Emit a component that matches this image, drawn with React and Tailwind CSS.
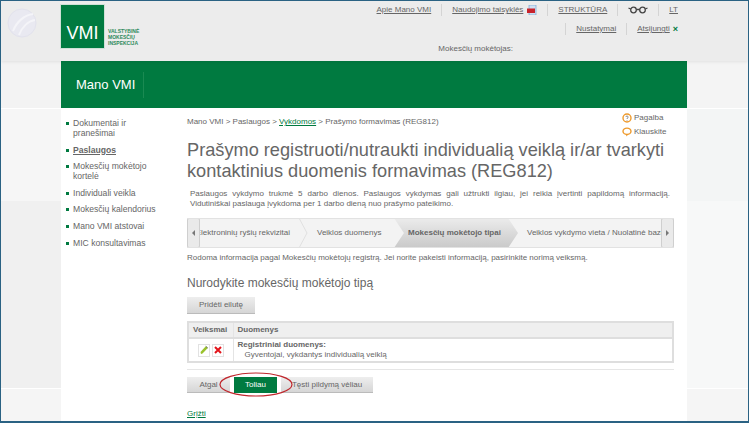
const menuItems = [
  { label: "Dokumentai ir pranešimai" },
  { label: "Paslaugos", active: true },
  { label: "Mokesčių mokėtojo kortelė" },
  { label: "Individuali veikla" },
  { label: "Mokesčių kalendorius" },
  { label: "Mano VMI atstovai" },
  { label: "MIC konsultavimas" },
];

const Sep = () => <span className="w-px h-[12px] bg-[#d4d4d4]" />;

const TabChevron = () => (
  <svg width="10" height="30" viewBox="0 0 10 30" className="shrink-0" fill="none">
    <path d="M1 0 L9 15 L1 30" stroke="#e0e0e0" strokeWidth="1" />
  </svg>
);

const App = () => {
  return (
    <div className="w-[749px] h-[423px] overflow-hidden bg-white border-x-[1px] border-t-[1px] border-b-[2px] border-[#2a6283] flex flex-col font-['Liberation_Sans',Arial,sans-serif] text-[#666]">
      {/* top header */}
      <header className="relative h-[60px] shrink-0 bg-[#ececec] flex pl-[59px] pt-[3px] shadow-[0_1px_3px_rgba(0,0,0,0.08)]">
        <svg width="34" height="32" viewBox="0 0 34 32" className="absolute left-[4px] top-[6px]" fill="none">
          <circle cx="17" cy="16" r="14" fill="#e9e9f1" stroke="#e2e2ec" />
          <path d="M8 24 C12 14 20 8 28 7 M14 28 C17 20 23 14 30 13" stroke="#f4f4f8" strokeWidth="2" />
        </svg>
        <div className="w-[45px] h-[45px] shrink-0 bg-[#007a40] border border-[#cfe0d6] flex items-end justify-center pb-[5px] text-white text-[18px] leading-[20px]">
          VMI
        </div>
        <div className="ml-[3px] mt-[24px] text-[#2c8a5c] text-[5px] leading-[6px] font-bold">
          <div>VALSTYBINĖ</div>
          <div>MOKESČIŲ</div>
          <div>INSPEKCIJA</div>
        </div>
        <div className="flex-1 relative text-[8px] leading-[12px]">
          <div className="flex items-center justify-end gap-[10px] pr-[70px] h-[12px]">
            <span className="underline">Apie Mano VMI</span>
            <Sep />
            <span className="underline flex items-center gap-[4px]">
              Naudojimo taisyklės
              <svg width="10" height="10" viewBox="0 0 10 10">
                <rect x="2" y="0" width="7" height="10" fill="#cfe0f2" stroke="#6a9ccc" strokeWidth="0.6" />
                <rect x="0" y="3.5" width="8" height="4.5" fill="#c8232c" />
              </svg>
            </span>
            <Sep />
            <span className="underline">STRUKTŪRA</span>
            <Sep />
            <svg width="20" height="8" viewBox="0 0 20 8" fill="none" stroke="#444" strokeWidth="1.3">
              <circle cx="5.5" cy="4" r="2.8" />
              <circle cx="14.5" cy="4" r="2.8" />
              <path d="M8.3 3.5 H11.7 M2.7 3 L0.5 2 M17.3 3 L19.5 2" />
            </svg>
            <Sep />
            <span className="underline">LT</span>
          </div>
          <div className="flex items-center justify-end gap-[10px] pr-[70px] mt-[7px] h-[12px]">
            <Sep />
            <span className="underline">Nustatymai</span>
            <Sep />
            <span className="flex items-center gap-[3px]">
              <span className="underline">Atsijungti</span>
              <span className="text-[#007a40] font-bold text-[9px] leading-none">×</span>
            </span>
          </div>
          <div className="mt-[8px] ml-[299px] whitespace-nowrap">Mokesčių mokėtojas:</div>
        </div>
      </header>

      <div className="flex-1 flex min-h-0">
        {/* left side strip */}
        <div className="w-[60px] shrink-0 flex flex-col">
          <div className="h-[47px] bg-[#f3f3f3]" />
          <div className="h-[1px] bg-white" />
          <div className="h-[92px] bg-[#f6f6f6]" />
          <div className="h-[187px] bg-[#f0f0f0]" />
          <div className="h-[1px] bg-white" />
          <div className="flex-1 bg-[#f5f5f5]" />
        </div>

        <div className="w-[626px] shrink-0 flex flex-col">
          <div className="h-[47px] shrink-0 bg-[#007a40] flex items-center pl-[15px]">
            <span className="text-white text-[13px] pr-[8px] h-[26px] leading-[26px] border-r border-[#1a8a52]">
              Mano VMI
            </span>
          </div>

          <div className="flex-1 flex min-h-0 bg-white">
            {/* sidebar menu */}
            <nav className="w-[126px] shrink-0 pl-[5px] pr-[22px] pt-[10px] text-[8.6px] leading-[10px]">
              {menuItems.map((item) => (
                <div key={item.label} className="flex mb-[6.6px]">
                  <span className="w-[3px] h-[3px] mt-[4px] mr-[4px] shrink-0 bg-[#007a40]" />
                  <span className={item.active ? "font-bold underline" : ""}>{item.label}</span>
                </div>
              ))}
            </nav>

            {/* main content */}
            <main className="w-[487px] shrink-0 relative pt-[9px]">
              <div className="text-[8px] leading-[10px]">
                Mano VMI &gt; Paslaugos &gt; <span className="text-[#007a40] underline">Vykdomos</span> &gt; Prašymo formavimas (REG812)
              </div>
              <div className="absolute left-[435px] top-[5px] text-[8px] leading-[10px]">
                <div className="flex items-center gap-[2px] mb-[4px]">
                  <svg width="10" height="10" viewBox="0 0 10 10" fill="none">
                    <circle cx="5" cy="5" r="4" stroke="#ee9a2c" strokeWidth="1.4" />
                    <path d="M3.8 4 C4 2.6 6.4 2.8 6 4.3 C5.8 5 5 5 5 6 M5 7.2 V7.8" stroke="#666" strokeWidth="0.8" />
                  </svg>
                  Pagalba
                </div>
                <div className="flex items-center gap-[2px]">
                  <svg width="10" height="10" viewBox="0 0 10 10" fill="none">
                    <ellipse cx="5" cy="4.3" rx="4" ry="3.2" stroke="#ee9a2c" strokeWidth="1.4" />
                    <path d="M4 7.5 L4.5 9.5 L6 7.5" fill="#ee9a2c" />
                  </svg>
                  Klauskite
                </div>
              </div>
              <h1 className="mt-[13px] text-[18.2px] leading-[21px] font-normal whitespace-nowrap">
                Prašymo registruoti/nutraukti individualią veiklą ir/ar tvarkyti
                <br />
                kontaktinius duomenis formavimas (REG812)
              </h1>
              <p className="mt-[7px] ml-[3px] w-[480px] text-[8px] leading-[10px] text-justify">
                Paslaugos vykdymo trukmė 5 darbo dienos. Paslaugos vykdymas gali užtrukti ilgiau, jei reikia įvertinti papildomą informaciją. Vidutiniškai paslauga įvykdoma per 1 darbo dieną nuo prašymo pateikimo.
              </p>

              {/* wizard tabs */}
              <div className="mt-[9px] h-[30px] w-[487px] bg-[#f3f3f3] border-y border-[#e2e2e2] flex items-center text-[8px] overflow-hidden">
                <button className="w-[13px] h-[30px] shrink-0 bg-[#eaeaea] border border-[#cfcfcf] rounded-[2px] flex items-center justify-center">
                  <span className="w-0 h-0 border-y-[3px] border-y-transparent border-r-[3px] border-r-[#777]" />
                </button>
                <div className="w-[98px] shrink-0 overflow-hidden whitespace-nowrap" dir="rtl">
                  <span dir="ltr" className="inline-block pr-[8px]">Elektroninių ryšių rekvizitai</span>
                </div>
                <TabChevron />
                <span className="w-[87px] shrink-0 pl-[9px] whitespace-nowrap">Veiklos duomenys</span>
                <div className="w-[124px] h-[30px] shrink-0 -ml-[1px] bg-gradient-to-b from-[#ececec] to-[#c9c9c9] [clip-path:polygon(0_0,92%_0,100%_50%,92%_100%,0_100%,8%_50%)] flex items-center pl-[14px] font-bold whitespace-nowrap">
                  Mokesčių mokėtojo tipai
                </div>
                <div className="flex-1 min-w-0 overflow-hidden whitespace-nowrap pl-[9px]">Veiklos vykdymo vieta / Nuolatinė bazė</div>
                <button className="w-[13px] h-[30px] shrink-0 bg-[#eaeaea] border border-[#cfcfcf] rounded-[2px] flex items-center justify-center">
                  <span className="w-0 h-0 border-y-[3px] border-y-transparent border-l-[3px] border-l-[#777]" />
                </button>
              </div>

              <p className="mt-[5px] text-[8px] leading-[10px]">
                Rodoma informacija pagal Mokesčių mokėtojų registrą. Jei norite pakeisti informaciją, pasirinkite norimą veiksmą.
              </p>
              <h2 className="mt-[12px] text-[12px] leading-[16px] font-normal">Nurodykite mokesčių mokėtojo tipą</h2>

              <button className="mt-[6px] block w-[68px] h-[17px] bg-gradient-to-b from-[#eeeeee] to-[#d6d6d6] border-b border-[#bbb] text-[8px] text-[#666]">
                Pridėti eilutę
              </button>

              <table className="mt-[7px] w-[487px] border-2 border-[#dedede] text-[8px] border-collapse">
                <thead>
                  <tr className="h-[16px] bg-[#efefef] border-b-2 border-[#dedede] font-bold text-left">
                    <th className="w-[45px] pl-[4px] border-r border-[#e4e4e4]">Veiksmai</th>
                    <th className="pl-[4px]">Duomenys</th>
                  </tr>
                </thead>
                <tbody>
                  <tr className="h-[24px]">
                    <td className="border-r border-[#e4e4e4]">
                      <div className="flex justify-center gap-[2px]">
                        <span className="w-[12px] h-[13px] border border-[#e2e2e2] flex items-center justify-center">
                          <svg width="10" height="10" viewBox="0 0 10 10">
                            <path d="M2 9 L1.5 7 L6.8 1.2 L8.8 3 L3.5 8.6 Z" fill="#9ac22c" />
                            <path d="M6.8 1.2 L8.8 3" stroke="#555" strokeWidth="0.8" />
                          </svg>
                        </span>
                        <span className="w-[12px] h-[13px] border border-[#e2e2e2] flex items-center justify-center">
                          <svg width="10" height="10" viewBox="0 0 10 10">
                            <path d="M2 2 L8 8 M8 2 L2 8" stroke="#e3141b" strokeWidth="2" />
                          </svg>
                        </span>
                      </div>
                    </td>
                    <td className="pl-[4px] leading-[10px]">
                      <div className="font-bold">Registriniai duomenys:</div>
                      <div className="pl-[7px]">Gyventojai, vykdantys individualią veiklą</div>
                    </td>
                  </tr>
                </tbody>
              </table>

              <div className="mt-[6px] h-[1px] bg-[#e6e6e6]" />

              <div className="relative mt-[7px] flex gap-[4px] text-[8px]">
                <button className="w-[43px] h-[16px] bg-gradient-to-b from-[#eeeeee] to-[#d6d6d6] border-b border-[#bbb] text-[#666]">Atgal</button>
                <button className="w-[43px] h-[16px] bg-[#007a40] text-white">Toliau</button>
                <button className="w-[92px] h-[16px] bg-gradient-to-b from-[#eeeeee] to-[#d6d6d6] border-b border-[#bbb] text-[#666]">Tęsti pildymą vėliau</button>
                <svg width="74" height="25" viewBox="0 0 74 25" className="absolute left-[32px] -top-[5px]" fill="none">
                  <ellipse cx="37" cy="12.5" rx="36" ry="11.5" stroke="#c0272d" strokeWidth="1.2" />
                </svg>
              </div>

              <a className="block mt-[16px] text-[8px] leading-[10px] text-[#007a40] underline">Grįžti</a>
            </main>
          </div>
        </div>

        {/* right side strip */}
        <div className="flex-1 flex flex-col">
          <div className="h-[47px] bg-[#f4f4f4]" />
          <div className="h-[1px] bg-white" />
          <div className="h-[92px] bg-[#f3f5f5]" />
          <div className="h-[187px] bg-[#f7f8f8]" />
          <div className="h-[1px] bg-white" />
          <div className="flex-1 bg-[#f5f5f5]" />
        </div>
      </div>
    </div>
  );
};

export default App;
